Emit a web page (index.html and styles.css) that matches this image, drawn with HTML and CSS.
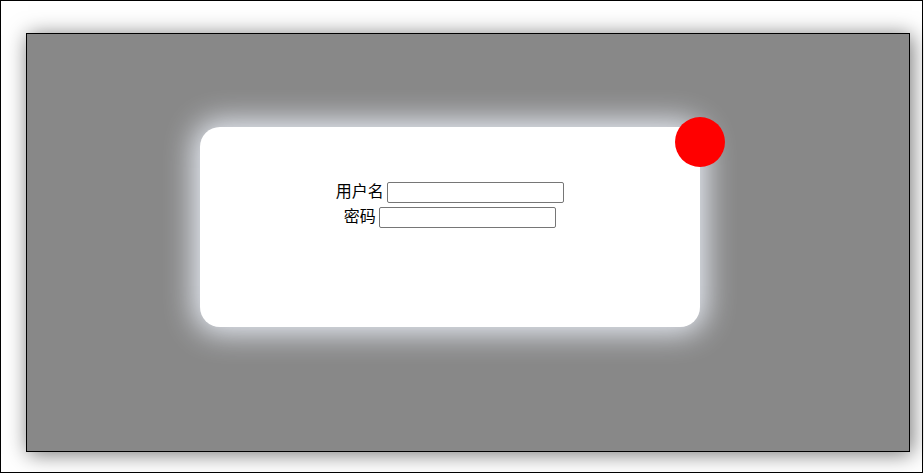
FILE: index.html
```html
<!DOCTYPE html>
<html lang="zh">
<head>
<meta charset="utf-8">
<title>登录</title>
<link rel="stylesheet" href="styles.css">
</head>
<body>
<div class="frame">
  <div class="stage">
    <div class="card">
      <span class="dot"></span>
      <form class="form">
        <div class="row"><label>用户名</label> <input type="text"></div>
        <div class="row"><label>密码</label> <input type="text"></div>
      </form>
    </div>
  </div>
</div>
</body>
</html>
```
FILE: styles.css
```css
html, body {
  margin: 0;
  padding: 0;
  background: #fff;
}
.frame {
  box-sizing: border-box;
  width: 923px;
  height: 473px;
  border: 1px solid #000;
  padding: 32px 0 0 25px;
}
.stage {
  box-sizing: border-box;
  width: 884px;
  height: 419px;
  background: #888;
  border: 1px solid #000;
  box-shadow: 2px 2px 20px rgba(0, 0, 0, 0.55);
  padding: 93px 0 0 173px;
}
.card {
  position: relative;
  box-sizing: border-box;
  width: 500px;
  height: 200px;
  background: #fff;
  border-radius: 20px;
  box-shadow: 0 0 30px 6px rgba(240, 245, 255, 0.95);
  padding-top: 51px;
}
.dot {
  position: absolute;
  top: -10px;
  right: -25px;
  width: 50px;
  height: 50px;
  border-radius: 50%;
  background: #f00;
}
.form {
  margin: 0;
  text-align: center;
  font-family: "Noto Sans CJK SC", "Noto Sans", sans-serif;
  font-size: 16px;
  color: #000;
}
.row {
  height: 25px;
  line-height: 25px;
}
.row input {
  box-sizing: border-box;
  width: 177px;
  height: 21px;
  border: 1px solid #767676;
  border-radius: 2px;
  padding: 1px 2px;
  vertical-align: middle;
  margin: 0;
}
```
